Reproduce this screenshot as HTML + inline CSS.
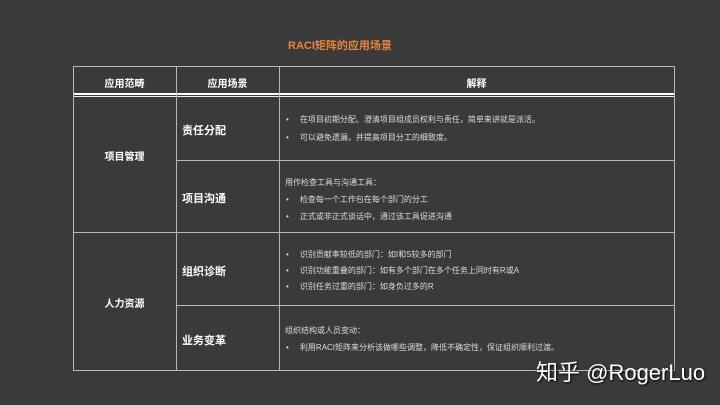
<!DOCTYPE html>
<html><head><meta charset="utf-8"><style>
body{margin:0;width:720px;height:405px;background:#3a3a3a;overflow:hidden;font-family:"Liberation Sans","Noto Sans CJK SC",sans-serif;color:#eee;position:relative}
.t{position:absolute;left:0;width:680px;top:37px;text-align:center;color:#e8843c;font-size:11px;font-weight:bold}
.l{position:absolute;background:#b8b8b8}
.x{position:absolute;font-size:8px;color:#ddd;white-space:nowrap}
.b{position:absolute;font-size:11px;font-weight:bold;color:#fff;white-space:nowrap}
.w{position:absolute;left:536px;top:355px;font-size:22px;color:#fff;text-shadow:1px 1px 2px #000;white-space:nowrap}
</style></head><body>
<div class="t">RACI矩阵的应用场景</div>
<div class="l" style="left:73px;top:66px;width:602px;height:1px"></div>
<div class="l" style="left:73px;top:93px;width:602px;height:2px;background:#fff"></div>
<div class="l" style="left:73px;top:96px;width:602px;height:1px;background:#eee"></div>
<div class="l" style="left:176px;top:160px;width:499px;height:1px"></div>
<div class="l" style="left:73px;top:232px;width:602px;height:1px"></div>
<div class="l" style="left:176px;top:305px;width:499px;height:1px"></div>
<div class="l" style="left:73px;top:370px;width:602px;height:1px"></div>
<div class="l" style="left:73px;top:66px;width:1px;height:305px"></div>
<div class="l" style="left:176px;top:66px;width:1px;height:305px"></div>
<div class="l" style="left:279px;top:66px;width:1px;height:305px"></div>
<div class="l" style="left:674px;top:66px;width:1px;height:305px"></div>
<div class="b" style="left:73px;width:103px;text-align:center;top:75px;font-size:10px">应用范畴</div>
<div class="b" style="left:176px;width:103px;text-align:center;top:75px;font-size:10px">应用场景</div>
<div class="b" style="left:279px;width:395px;text-align:center;top:75px;font-size:10px">解释</div>
<div class="b" style="left:73px;width:103px;text-align:center;top:148px;font-size:10px">项目管理</div>
<div class="b" style="left:73px;width:103px;text-align:center;top:295px;font-size:10px">人力资源</div>
<div class="b" style="left:182px;top:122px">责任分配</div>
<div class="b" style="left:182px;top:190px">项目沟通</div>
<div class="b" style="left:182px;top:263px">组织诊断</div>
<div class="b" style="left:182px;top:332px">业务变革</div>
<div class="x" style="left:286px;top:114px">•&nbsp;&nbsp;&nbsp;&nbsp;&nbsp;在项目初期分配、澄清项目组成员权利与责任，简单来讲就是派活。</div>
<div class="x" style="left:286px;top:132px">•&nbsp;&nbsp;&nbsp;&nbsp;&nbsp;可以避免遗漏，并提高项目分工的细致度。</div>
<div class="x" style="left:285px;top:177px">用作检查工具与沟通工具：</div>
<div class="x" style="left:286px;top:194px">•&nbsp;&nbsp;&nbsp;&nbsp;&nbsp;检查每一个工作包在每个部门的分工</div>
<div class="x" style="left:286px;top:211px">•&nbsp;&nbsp;&nbsp;&nbsp;&nbsp;正式或非正式谈话中，通过该工具促进沟通</div>
<div class="x" style="left:286px;top:249px">•&nbsp;&nbsp;&nbsp;&nbsp;&nbsp;识别贡献率较低的部门：如I和S较多的部门</div>
<div class="x" style="left:286px;top:265px">•&nbsp;&nbsp;&nbsp;&nbsp;&nbsp;识别功能重叠的部门：如有多个部门在多个任务上同时有R或A</div>
<div class="x" style="left:286px;top:281px">•&nbsp;&nbsp;&nbsp;&nbsp;&nbsp;识别任务过重的部门：如身负过多的R</div>
<div class="x" style="left:285px;top:325px">组织结构或人员变动：</div>
<div class="x" style="left:286px;top:342px">•&nbsp;&nbsp;&nbsp;&nbsp;&nbsp;利用RACI矩阵来分析该做哪些调整，降低不确定性，保证组织顺利过渡。</div>
<div class="w">知乎 @RogerLuo</div>
</body></html>
